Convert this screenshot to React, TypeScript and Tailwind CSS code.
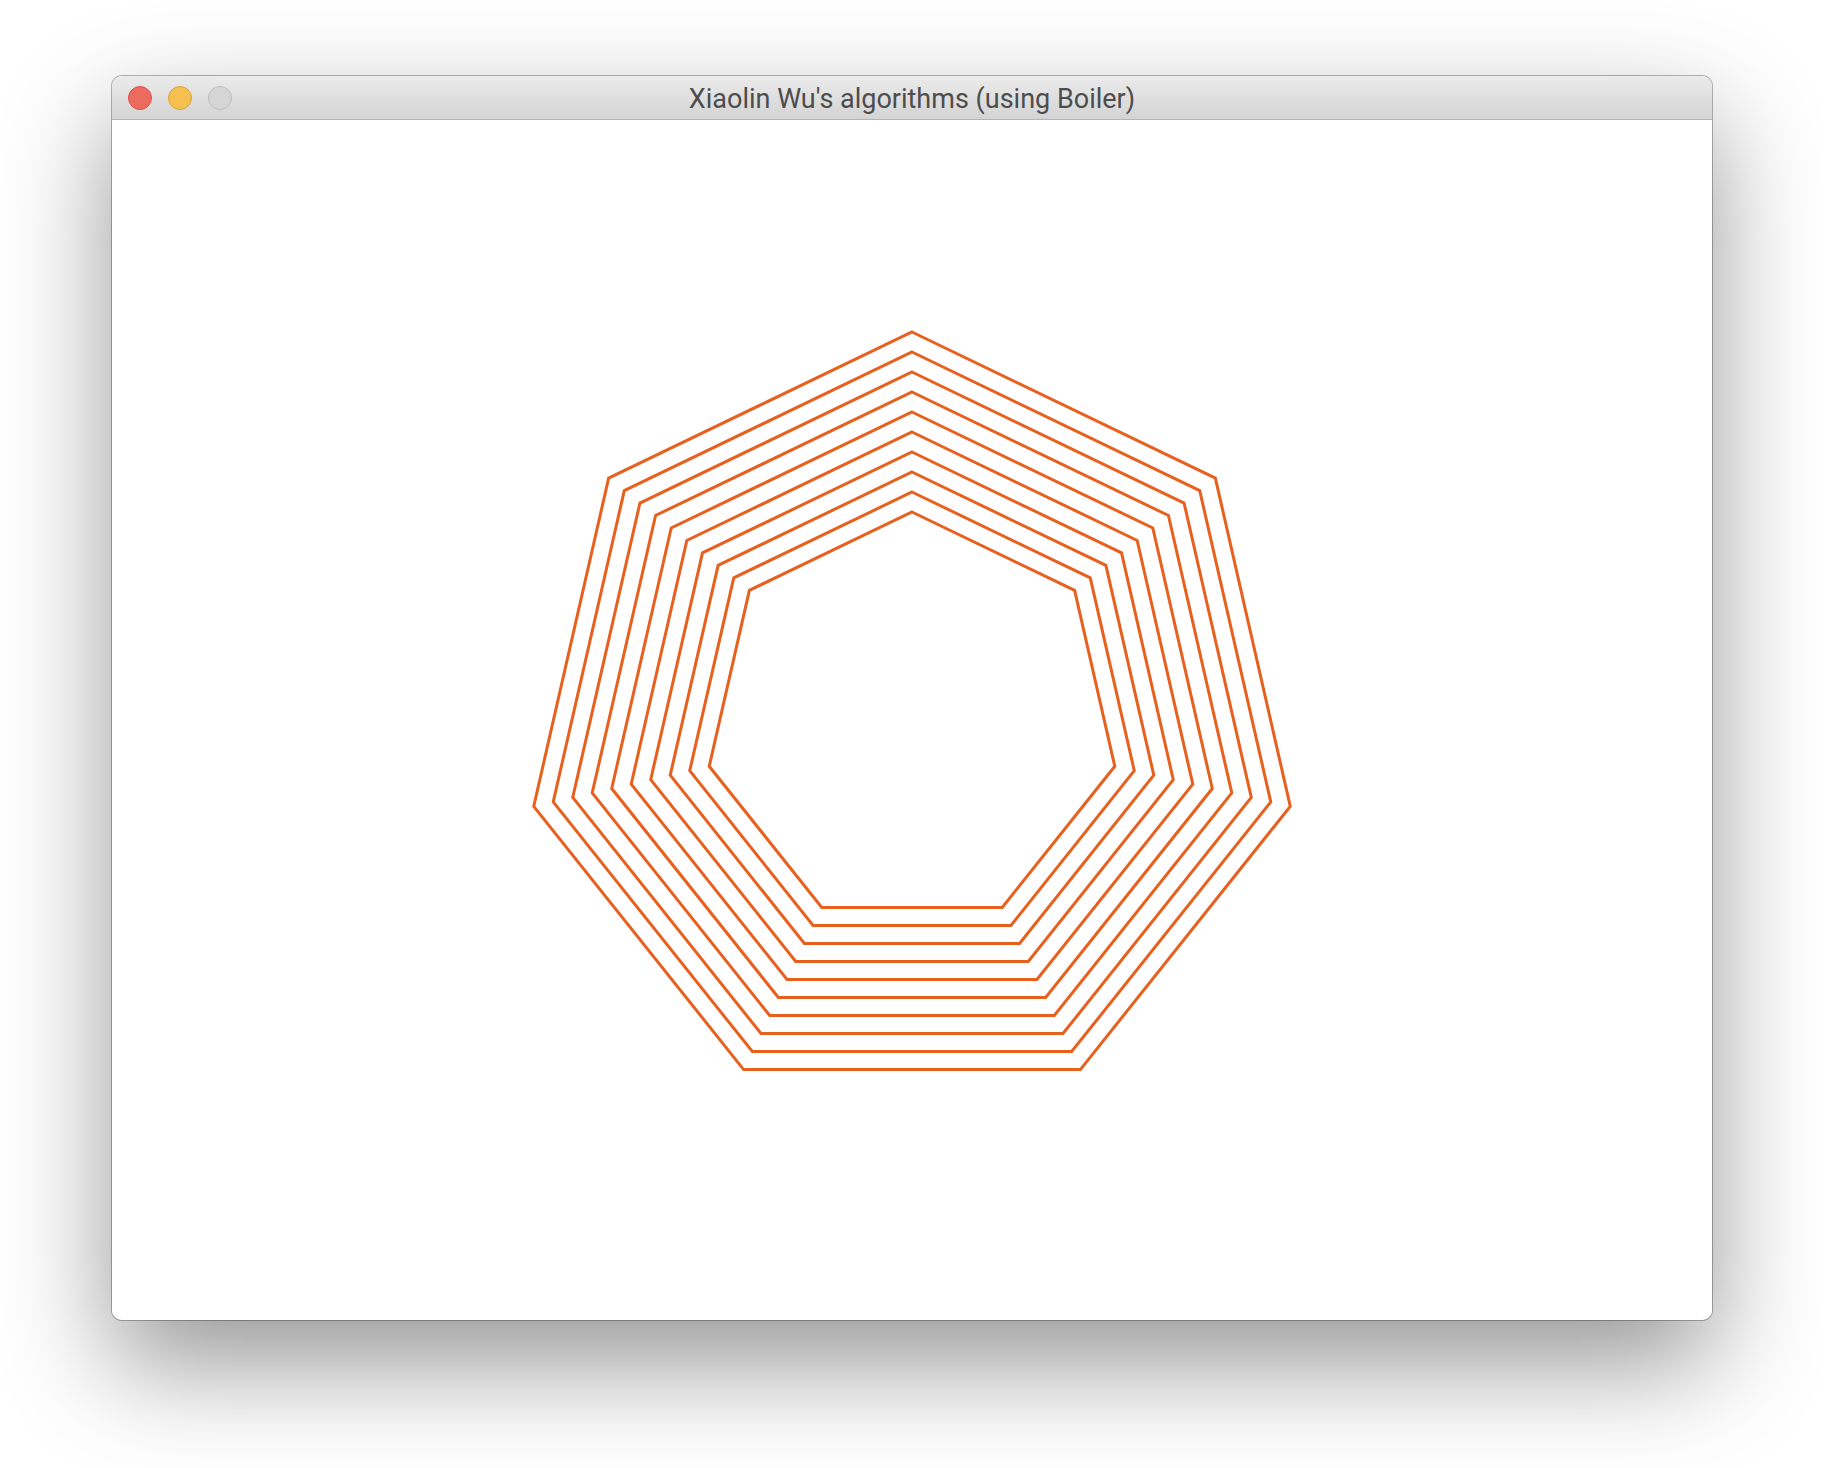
import React from "react";

// nested heptagons, drawn at 2x (content is 1600x1200)
const CX = 800;
const CY = 600;
const RADII = [388, 368, 348, 328, 308, 288, 268, 248, 228, 208];

function heptagon(r: number) {
  const pts: string[] = [];
  for (let k = 0; k < 7; k++) {
    const a = -Math.PI / 2 + (k * 2 * Math.PI) / 7;
    pts.push(`${(CX + r * Math.cos(a)).toFixed(2)},${(CY + r * Math.sin(a)).toFixed(2)}`);
  }
  return pts.join(" ");
}

function TrafficLights() {
  return (
    <div className="flex items-center gap-4 pl-[16px]">
      <span className="w-6 h-6 rounded-full bg-[#ed6a5e] border border-[#d4544a]" />
      <span className="w-6 h-6 rounded-full bg-[#f5c04f] border border-[#d9a33f]" />
      <span className="w-6 h-6 rounded-full bg-[#d6d6d6] border border-[#bdbdbd]" />
    </div>
  );
}

export default function App() {
  return (
    <div className="w-full h-[1468px] bg-white flex justify-center pt-[76px]">
      <div className="w-[1600px] h-[1244px] flex flex-col rounded-[10px] overflow-hidden bg-white shadow-[0_0_0_1px_rgba(0,0,0,0.28),0_44px_110px_rgba(0,0,0,0.42)]">
        {/* title bar */}
        <div className="relative h-[44px] shrink-0 flex items-center bg-gradient-to-b from-[#ebebeb] to-[#d4d4d4] border-b border-[#b4b4b4]">
          <TrafficLights />
          <div className="absolute inset-0 pt-[3px] flex items-center justify-center text-[27px] text-[#4d4d4d] font-['Roboto',sans-serif]">
            Xiaolin Wu's algorithms (using Boiler)
          </div>
        </div>

        {/* canvas */}
        <div className="h-[1200px] bg-white">
          <svg width="1600" height="1200" viewBox="0 0 1600 1200">
            {RADII.map((r) => (
              <polygon
                key={r}
                points={heptagon(r)}
                fill="none"
                stroke="#e8601e"
                strokeWidth={3}
                strokeLinejoin="miter"
              />
            ))}
          </svg>
        </div>
      </div>
    </div>
  );
}
